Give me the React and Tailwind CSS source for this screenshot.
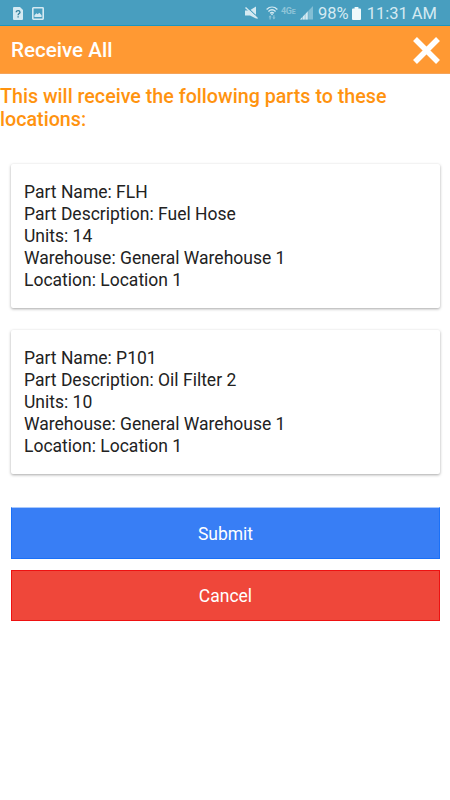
import { useState } from 'react'

const parts = [
  { name: 'FLH', description: 'Fuel Hose', units: 14, warehouse: 'General Warehouse 1', location: 'Location 1' },
  { name: 'P101', description: 'Oil Filter 2', units: 10, warehouse: 'General Warehouse 1', location: 'Location 1' },
]

function StatusBar() {
  return (
    <div className="flex h-[26px] items-center justify-between border-b border-[#1c96bd] bg-[#489ebf] pt-px pr-[13px] pl-[13px] text-[#d5eaf2]">
      <div className="flex items-center gap-[9px]">
        <svg width="10" height="13" viewBox="0 0 10 13">
          <path d="M1 0h6l3 3v9a1 1 0 0 1-1 1H1a1 1 0 0 1-1-1V1a1 1 0 0 1 1-1z" fill="currentColor" />
          <path d="M3.2 5.2c0-2.2 3.8-2.2 3.8 0 0 1.4-1.9 1.4-1.9 3.1M5.1 9.3v1.3" fill="none" stroke="#337f9c" strokeWidth="1.3" />
        </svg>
        <svg width="12" height="13" viewBox="0 0 12 13">
          <rect x="0.8" y="0.8" width="10.4" height="11.4" rx="0.6" fill="none" stroke="currentColor" strokeWidth="1.6" />
          <path d="M2.4 10V8.2l2-2 1.3 1.1 1.6-1.5 2.3 2.4V10z" fill="currentColor" />
        </svg>
      </div>
      <div className="flex items-center">
        <svg width="13" height="14" viewBox="0 0 13 14" className="mr-[8px]">
          <path d="M0 4.5h4.5L11 0.5v12L5 9.5H0z" fill="currentColor" />
          <path d="M1.7 1l11.3 10.5" stroke="#489ebf" strokeWidth="1.1" />
          <path d="M0.5 1.5l12 11" stroke="currentColor" strokeWidth="1.4" />
        </svg>
        <svg width="12" height="14" viewBox="0 0 12 14" className="mr-[3px]">
          <path d="M0.6 3.4c3.2-3 7.6-3 10.8 0M2.4 5.4c2.2-2 5-2 7.2 0M4.1 7.2c1.3-1.1 2.5-1.1 3.8 0" fill="none" stroke="currentColor" strokeWidth="1.4" />
          <path d="M4.5 7.4h3L6 9.4z" fill="currentColor" />
          <path d="M2.5 11.2l1.6-2 1.6 2H4.7v2.4H3.5v-2.4zM6.3 11.6h1V9.2h1.2v2.4h1l-1.6 2z" fill="#8ec4d8" />
        </svg>
        <span className="mr-[3px] h-[14px] w-[16px] text-[9px] leading-[11px] font-bold tracking-[-0.300px] whitespace-nowrap text-[#8ec4d8]">4G<span className="text-[7px]">E</span></span>
        <svg width="13" height="14" viewBox="0 0 13 14" className="mr-[5px]">
          <path d="M0 13.5L13 0v13.5z" fill="#83bed4" />
          <path d="M0 13.5l8-8.3v8.3z" fill="currentColor" />
          <path d="M2.5 8v6M5.2 6v8M8 3v11" stroke="#489ebf" strokeWidth="0.4" />
        </svg>
        <span className="text-[16.500px] leading-[25px]">98%</span>
        <svg width="9" height="13" viewBox="0 0 9 13" className="mr-[6px] ml-[3px]">
          <path d="M2.6 0h3.8v1.5H8a1 1 0 0 1 1 1V12a1 1 0 0 1-1 1H1a1 1 0 0 1-1-1V2.5a1 1 0 0 1 1-1h1.6z" fill="#f0f9fb" />
        </svg>
        <span className="text-[16.500px] leading-[25px]">11:31 AM</span>
      </div>
    </div>
  )
}

function PartCard({ part }) {
  return (
    <div className="h-[144px] rounded-[2px] bg-white px-[13px] pt-[17px] text-[17.500px] leading-[22px] text-[#222] shadow-[0_1px_3px_rgba(0,0,0,0.35)]">
      <p>Part Name: {part.name}</p>
      <p>Part Description: {part.description}</p>
      <p>Units: {part.units}</p>
      <p>Warehouse: {part.warehouse}</p>
      <p>Location: {part.location}</p>
    </div>
  )
}

export default function App() {
  const [open, setOpen] = useState(true)
  const close = () => setOpen(false)

  return (
    <main className="min-h-screen bg-white font-[Roboto,sans-serif]">
      <StatusBar />
      <header className="flex h-[48px] items-center justify-between border-b border-[#f5a45a] bg-[#ff9933] pr-[10px] pl-[11px] text-white">
        <h1 className="text-[20.600px] leading-[30px] font-medium">Receive All</h1>
        <button onClick={close} aria-label="Close" className="pt-px">
          <svg width="27" height="27" viewBox="0 0 27 27">
            <path d="M2 2l23 23M25 2L2 25" stroke="currentColor" strokeWidth="5.500" />
          </svg>
        </button>
      </header>

      {open ? (
        <>
          <h2 className="pt-[11px] text-[19.700px] leading-[23px] font-medium text-[#ff930f]">This will receive the following parts to these locations:</h2>
          <section className="mt-[33px] flex flex-col gap-[22px] pr-[10px] pl-[11px]">
            {parts.map((part) => <PartCard key={part.name} part={part} />)}
          </section>
          <div className="mt-[33px] flex flex-col gap-[11px] pr-[10px] pl-[11px] text-[17.500px] text-white">
            <button onClick={close} className="h-[52px] border border-[#1a70f8] border-t-[#a9c9fc] bg-[#387ef5] pt-[2px]">Submit</button>
            <button onClick={close} className="h-[51px] border border-[#ee1111] bg-[#ef473a] pt-px">Cancel</button>
          </div>
        </>
      ) : null}
    </main>
  )
}
